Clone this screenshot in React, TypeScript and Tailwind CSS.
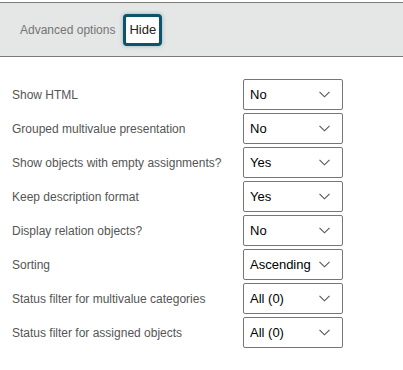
import React from "react";

const rows: [string, string][] = [
  ["Show HTML", "No"],
  ["Grouped multivalue presentation", "No"],
  ["Show objects with empty assignments?", "Yes"],
  ["Keep description format", "Yes"],
  ["Display relation objects?", "No"],
  ["Sorting", "Ascending"],
  ["Status filter for multivalue categories", "All (0)"],
  ["Status filter for assigned objects", "All (0)"],
];

function Chevron() {
  return (
    <svg width="11" height="7" viewBox="0 0 11 7" className="shrink-0">
      <path d="M0.5 0.8 L5.5 5.8 L10.5 0.8" fill="none" stroke="#555" strokeWidth="1.1" />
    </svg>
  );
}

export default function App() {
  return (
    <div className="w-[403px] h-[370px] bg-white font-['Liberation_Sans',Arial,sans-serif]">
      <div className="pt-[2px]">
        <div className="h-[55px] bg-[#e5e6e6] border-t-[1.5px] border-b-[1.5px] border-[#7a7a7a] flex items-center pl-[20px]">
          <span className="text-[12px] text-[#757575]">Advanced options</span>
          <button className="ml-[8px] h-[32px] px-[3px] bg-white border-[3px] border-[#0b5469] rounded-[4px] text-[13px] text-[#222] shadow-[0_0_4px_rgba(11,84,105,0.35)]">
            Hide
          </button>
        </div>
      </div>
      <div className="pt-[22px] flex flex-col gap-[3px]">
        {rows.map(([label, value]) => (
          <div key={label} className="flex items-center h-[31px]">
            <div className="w-[243px] pl-[12px] text-[12px] text-[#555]">{label}</div>
            <div className="w-[100px] h-[31px] border border-[#767676] rounded-[2px] flex items-center justify-between pl-[6px] pr-[12px]">
              <span className="text-[13px] text-black">{value}</span>
              <Chevron />
            </div>
          </div>
        ))}
      </div>
    </div>
  );
}
